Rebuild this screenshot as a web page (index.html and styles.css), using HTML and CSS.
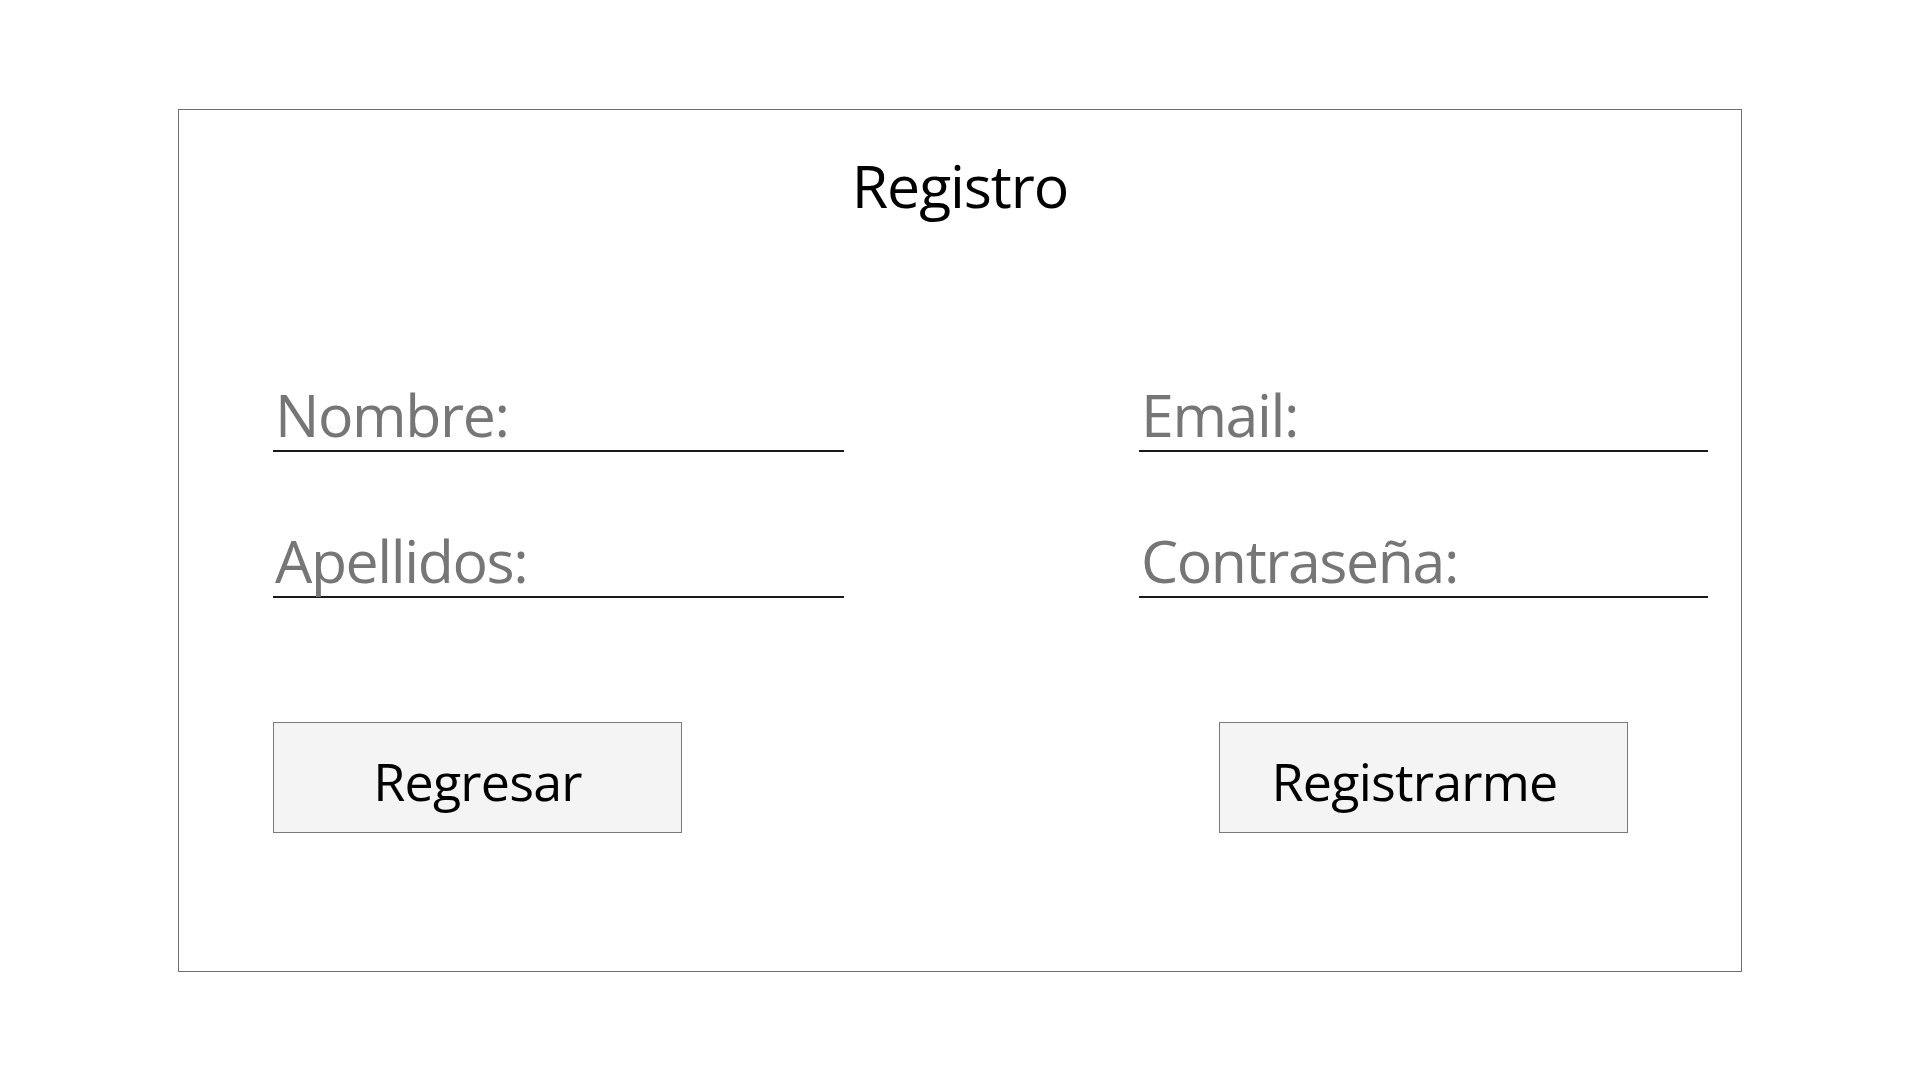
FILE: index.html
```html
<!DOCTYPE html>
<html lang="es">
<head>
<meta charset="utf-8">
<title>Registro</title>
<link rel="stylesheet" href="styles.css">
</head>
<body>
<main class="page">
  <section class="card">
    <h1 class="title">Registro</h1>
    <div class="fields">
      <div class="field">Nombre:</div>
      <div class="field">Email:</div>
      <div class="field">Apellidos:</div>
      <div class="field">Contraseña:</div>
    </div>
    <div class="actions">
      <button class="btn btn-left" type="button">Regresar</button>
      <button class="btn btn-right" type="button">Registrarme</button>
    </div>
  </section>
</main>
</body>
</html>
```

FILE: styles.css
```css
html, body {
  margin: 0;
  padding: 0;
  background: #ffffff;
}

body {
  font-family: "Open Sans", "Noto Sans", "Liberation Sans", sans-serif;
}

.page {
  width: 1920px;
  height: 1080px;
  display: flex;
  align-items: center;
  justify-content: center;
}

.card {
  box-sizing: border-box;
  width: 1564px;
  height: 863px;
  border: 1px solid #6e6e6e;
  padding: 46px 33px 0 94px;
  display: flex;
  flex-direction: column;
}

.title {
  margin: 0 0 0 -61px;
  font-size: 59px;
  line-height: 59px;
  font-weight: 400;
  letter-spacing: -1.1px;
  color: #000000;
  text-align: center;
}

.fields {
  margin-top: 170px;
  display: grid;
  grid-template-columns: 571px 569px;
  column-gap: 295px;
  row-gap: 79px;
}

.field {
  font-size: 59px;
  line-height: 59px;
  letter-spacing: -1.4px;
  padding-bottom: 6px;
  padding-left: 2px;
  border-bottom: 2px solid #1a1a1a;
  color: #767676;
}

.actions {
  margin-top: 124px;
  display: grid;
  grid-template-columns: 571px 569px;
  column-gap: 295px;
}

.btn {
  box-sizing: border-box;
  width: 409px;
  height: 111px;
  border: 1px solid #7a7a7a;
  background: #f4f4f4;
  color: #000000;
  font-family: "Open Sans", "Noto Sans", "Liberation Sans", sans-serif;
  font-size: 52px;
  line-height: 52px;
  letter-spacing: -0.8px;
  padding: 8px 0 0 0;
  display: flex;
  align-items: center;
  justify-content: center;
}

.btn-left {
  justify-self: start;
}

.btn-right {
  justify-self: center;
  padding-right: 18px;
}
```
